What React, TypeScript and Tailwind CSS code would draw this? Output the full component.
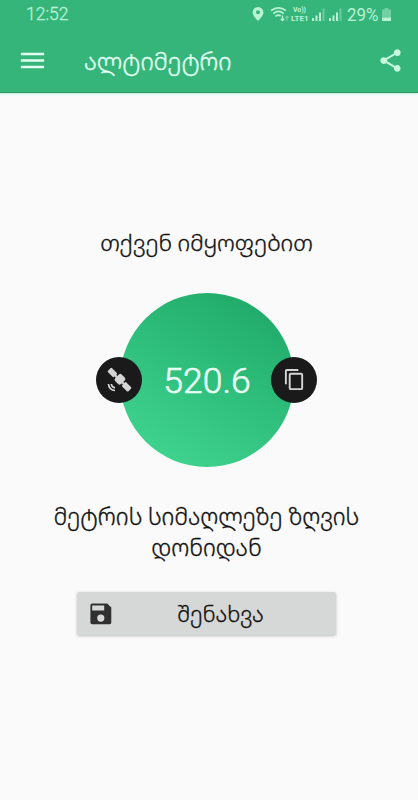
import { MdContentCopy, MdMenu, MdShare } from "react-icons/md";

function StatusIcons() {
  return (
    <svg width="142" height="20" viewBox="0 0 142 20" fill="#b9f3d3">
      <path d="M7 2a5.400 5.400 0 0 0-5.400 5.400c0 3.700 5.400 8.400 5.400 8.400s5.400-4.700 5.400-8.400A5.400 5.400 0 0 0 7 2Zm0 7.300a2 2 0 1 1 0-4 2 2 0 0 1 0 4Z" />
      <g fill="none" stroke="#b9f3d3" strokeWidth="1.700">
        <path d="M20 5.700c4.500-3.800 10.500-3.800 15 0" />
        <path d="M22.200 8.600c3.200-2.600 7.400-2.600 10.600 0" />
        <path d="M24.400 11.300c1.900-1.500 3.900-1.500 5.400-.3" />
        <path d="M31.500 10.500v5M29.700 13.800l1.800 1.800 1.800-1.800" strokeWidth="1.300" />
        <path d="M36 15.800v-4.500M34.400 12.900l1.600-1.600 1.600 1.600" strokeWidth="1.200" opacity=".5" />
      </g>
      <text x="42" y="7.300" fontSize="6.500" fontWeight="700" textLength="13" lengthAdjust="spacingAndGlyphs">
        Vo))
      </text>
      <text x="40" y="16" fontSize="8" fontWeight="700" textLength="17.500" lengthAdjust="spacingAndGlyphs">
        LTE1
      </text>
      <path d="M61 13h2v3h-2zM64.500 10.500h2v5.500h-2zM68 7.500h2v8.500h-2z" />
      <path d="M71.500 3.500h2v12.500h-2z" opacity=".4" />
      <path d="M78 13h2v3h-2zM81.500 10.500h2v5.500h-2zM85 7.500h2v8.500h-2z" />
      <path d="M88.500 3.500h2v12.500h-2z" opacity=".4" />
      <text x="96" y="16" fontSize="17.500" textLength="31.500" lengthAdjust="spacingAndGlyphs">
        29%
      </text>
      <path d="M133.500 3h4v1.500h2.500v8h-9v-8h2.500z" opacity=".45" />
      <path d="M131 12.500h9v3.500h-9z" />
    </svg>
  );
}

function SatelliteIcon() {
  return (
    <svg width="26" height="26" viewBox="0 0 26 26" fill="#d4d4d4">
      <g transform="rotate(45 13.500 12.700)">
        <rect x="-1" y="9.800" width="8.800" height="5.800" rx="1.200" />
        <rect x="19.200" y="9.800" width="8.800" height="5.800" rx="1.200" />
        <rect x="7" y="11.600" width="13" height="2.200" />
        <path d="M9.300 9.500a2 2 0 0 1 2-2h4.400a2 2 0 0 1 2 2v4.900a2.400 2.400 0 0 1-2.400 2.400h-3.600a2.400 2.400 0 0 1-2.400-2.400Z" />
      </g>
      <g fill="none" stroke="#d4d4d4" strokeWidth="1.700">
        <path d="M2.500 17a6.500 6.500 0 0 0 6.500 6.500" />
        <path d="M5.400 17A3.600 3.600 0 0 0 9 20.600" />
      </g>
    </svg>
  );
}

function SaveIcon() {
  return (
    <svg width="22" height="22" viewBox="0 0 22 22">
      <path d="M2.200.500h15L21.300 4.500v14.900a1.800 1.800 0 0 1-1.800 1.800H2.200a1.800 1.800 0 0 1-1.800-1.800V2.300A1.800 1.800 0 0 1 2.200.500ZM2.200 2.500v5h12v-5ZM10.800 11.500a3.600 3.600 0 1 0 0 7.200 3.600 3.600 0 0 0 0-7.200Z" fill="#303030" fillRule="evenodd" />
    </svg>
  );
}

export default function App() {
  return (
    <div className="flex h-[800px] w-[418px] flex-col overflow-hidden bg-[#fafafa] font-['Roboto','Noto_Sans_Georgian',sans-serif] text-[#111111]">
      <header className="h-[93px] shrink-0 border-b border-[#2b9565] bg-[#36b57b] shadow-[0_1px_2px_#b9eed4]">
        <div className="flex h-7 items-center justify-between pt-px pr-[25px] pl-[26px]">
          <span className="text-[17.5px] font-light text-[#b9f3d3] [-webkit-text-stroke:0.3px]">12:52</span>
          <StatusIcons />
        </div>
        <div className="flex h-16 items-center pr-[14px] pl-[17px]">
          <MdMenu className="size-[31px] text-[#e2fff2]" />
          <h1 className="ml-[36px] flex-1 pt-[3px] text-[24px] font-light whitespace-nowrap text-[#e2fff2] [-webkit-text-stroke:0.4px]">
            ალტიმეტრი
          </h1>
          <MdShare className="size-[27px] text-[#c9fbe0]" />
        </div>
      </header>

      <main className="flex flex-col items-center pr-[5px]">
        <p className="mt-[136px] h-[30px] text-[22.8px] leading-[30px] font-light whitespace-nowrap [-webkit-text-stroke:0.35px]">
          თქვენ იმყოფებით
        </p>

        <div className="mt-[33px] flex h-[175px] items-center justify-center">
          <div className="z-10 -mr-[22px] flex size-[46px] shrink-0 items-center justify-center rounded-full bg-[#1a1a1a]">
            <SatelliteIcon />
          </div>
          <div className="flex size-[174px] shrink-0 items-center justify-center rounded-full bg-linear-[30deg] from-[#43d994] to-[#1ca565]">
            <span className="pt-[5px] text-[35.500px] font-light text-[#e9fff5] [-webkit-text-stroke:0.6px]">520.6</span>
          </div>
          <div className="z-10 -ml-[23px] flex size-[46px] shrink-0 items-center justify-center rounded-full bg-[#1a1a1a]">
            <MdContentCopy className="size-[23px] text-[#d4d4d4]" />
          </div>
        </div>

        <p className="mt-[35px] text-center text-[23.1px] leading-[31px] font-light whitespace-nowrap [-webkit-text-stroke:0.35px]">
          მეტრის სიმაღლეზე ზღვის
          <br />
          დონიდან
        </p>

        <button className="mt-[28px] flex h-[43px] w-[259px] items-center rounded-[2px] bg-[#d6d8d7] pl-[13px] shadow-[0_1px_3px_rgba(0,0,0,0.25)]">
          <SaveIcon />
          <span className="flex-1 pt-px pr-[7px] text-center text-[22px] font-light [-webkit-text-stroke:0.35px]">
            შენახვა
          </span>
        </button>
      </main>
    </div>
  );
}
